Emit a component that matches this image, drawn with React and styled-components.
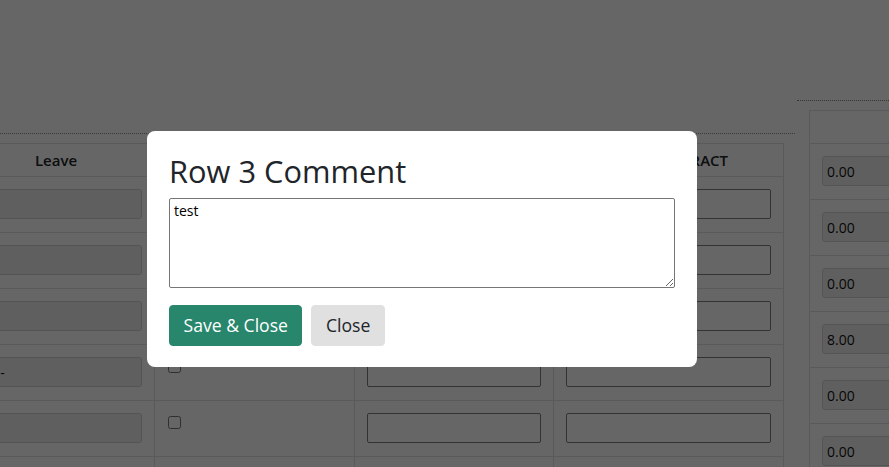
import React from "react";
import styled, { createGlobalStyle } from "styled-components";

const Global = createGlobalStyle`
  html, body { margin: 0; padding: 0; background: #fff; overflow: hidden; }
  body { font-family: "Open Sans", "Liberation Sans", sans-serif; color: #212529; }
  * { box-sizing: border-box; }
`;

const Page = styled.div`
  display: flex;
  align-items: flex-start;
  gap: 2px;
  margin-left: -55px;
  width: 1200px;
`;

const Panel = styled.section`
  flex: none;
  width: ${(p) => p.$width}px;
  margin-top: ${(p) => p.$top}px;
  border-top: 1px dotted #8a8a8a;
  padding: 9px 11px 0 12px;
`;

const Table = styled.table`
  border-collapse: collapse;
  table-layout: fixed;
  width: ${(p) => p.$width}px;
`;

const Th = styled.th`
  height: 33px;
  padding: 0 12px 1px;
  border: 1px solid #dee2e6;
  font-size: 15px;
  font-weight: 600;
  text-align: center;
  vertical-align: middle;
  color: #212529;
  white-space: nowrap;
`;

const Tr = styled.tr`
  height: 56px;
`;

const Td = styled.td`
  padding: 12px;
  border: 1px solid #dee2e6;
  vertical-align: top;
`;

const ReadField = styled.input`
  display: block;
  width: 100%;
  height: 30px;
  margin: 0;
  padding: 0 ${(p) => p.$pad}px;
  font-family: "Open Sans", "Liberation Sans", sans-serif;
  font-size: 14px;
  color: #111;
  background: #eeeeee;
  border: 1px solid #d2d2d2;
  border-radius: 3px;
  outline: none;
`;

const TextField = styled.input`
  display: block;
  width: 100%;
  height: 30px;
  margin: 0;
  padding: 0 6px;
  font-family: "Open Sans", "Liberation Sans", sans-serif;
  font-size: 14px;
  background: #fff;
  border: 1px solid #808080;
  border-radius: 2px;
  outline: none;
`;

const Check = styled.input`
  display: block;
  width: 13px;
  height: 13px;
  margin: 3px 0 0 1px;
`;

const Overlay = styled.div`
  position: fixed;
  inset: 0;
  background: rgba(0, 0, 0, 0.6);
`;

const Modal = styled.div`
  position: absolute;
  left: 147px;
  top: 131px;
  width: 550px;
  padding: 22px 22px 21px;
  background: #fff;
  border-radius: 8px;
`;

const Title = styled.h2`
  margin: 0 0 9px;
  font-size: 30.8px;
  line-height: 36px;
  font-weight: 400;
  color: #212529;
`;

const Comment = styled.textarea`
  display: block;
  width: 100%;
  height: 90px;
  margin: 0 0 17px;
  padding: 2px 4px;
  font-family: "Open Sans", "Liberation Sans", sans-serif;
  font-size: 14px;
  line-height: normal;
  color: #000;
  border: 1px solid #767676;
  border-radius: 2px;
  outline: none;
`;

const Actions = styled.div`
  display: flex;
  gap: 9px;
`;

const Button = styled.button`
  height: 41px;
  padding: 0 13.5px 2px;
  font-family: "Open Sans", "Liberation Sans", sans-serif;
  font-size: 17.6px;
  border: 1px solid ${(p) => (p.$primary ? "#27866c" : "#e0e0e0")};
  border-radius: 4px;
  background: ${(p) => (p.$primary ? "#27866c" : "#e0e0e0")};
  color: ${(p) => (p.$primary ? "#fff" : "#212529")};
  cursor: pointer;
`;

const leaveValues = ["", "", "", "PL -", "", ""];
const hours = ["0.00", "0.00", "0.00", "8.00", "0.00", "0.00"];

export default function App() {
  return (
    <>
      <Global />
      <Page>
        <Panel $width={850} $top={133}>
          <Table $width={827}>
            <colgroup>
              <col style={{ width: 197 }} />
              <col style={{ width: 200 }} />
              <col style={{ width: 199 }} />
              <col style={{ width: 230 }} />
            </colgroup>
            <thead>
              <tr>
                <Th>Leave</Th>
                <Th />
                <Th />
                <Th>NON-CONTRACT</Th>
              </tr>
            </thead>
            <tbody>
              {leaveValues.map((v, i) => (
                <Tr key={i}>
                  <Td>
                    <ReadField $pad={10} readOnly value={v} />
                  </Td>
                  <Td>
                    <Check type="checkbox" readOnly />
                  </Td>
                  <Td>
                    <TextField readOnly value="" />
                  </Td>
                  <Td>
                    <TextField readOnly value="" />
                  </Td>
                </Tr>
              ))}
            </tbody>
          </Table>
        </Panel>
        <Panel $width={300} $top={100}>
          <Table $width={200}>
            <thead>
              <tr>
                <Th />
              </tr>
            </thead>
            <tbody>
              {hours.map((h, i) => (
                <Tr key={i}>
                  <Td>
                    <ReadField $pad={4} readOnly value={h} />
                  </Td>
                </Tr>
              ))}
            </tbody>
          </Table>
        </Panel>
      </Page>
      <Overlay>
        <Modal>
          <Title>Row 3 Comment</Title>
          <Comment defaultValue="test" />
          <Actions>
            <Button $primary>Save &amp; Close</Button>
            <Button>Close</Button>
          </Actions>
        </Modal>
      </Overlay>
    </>
  );
}
